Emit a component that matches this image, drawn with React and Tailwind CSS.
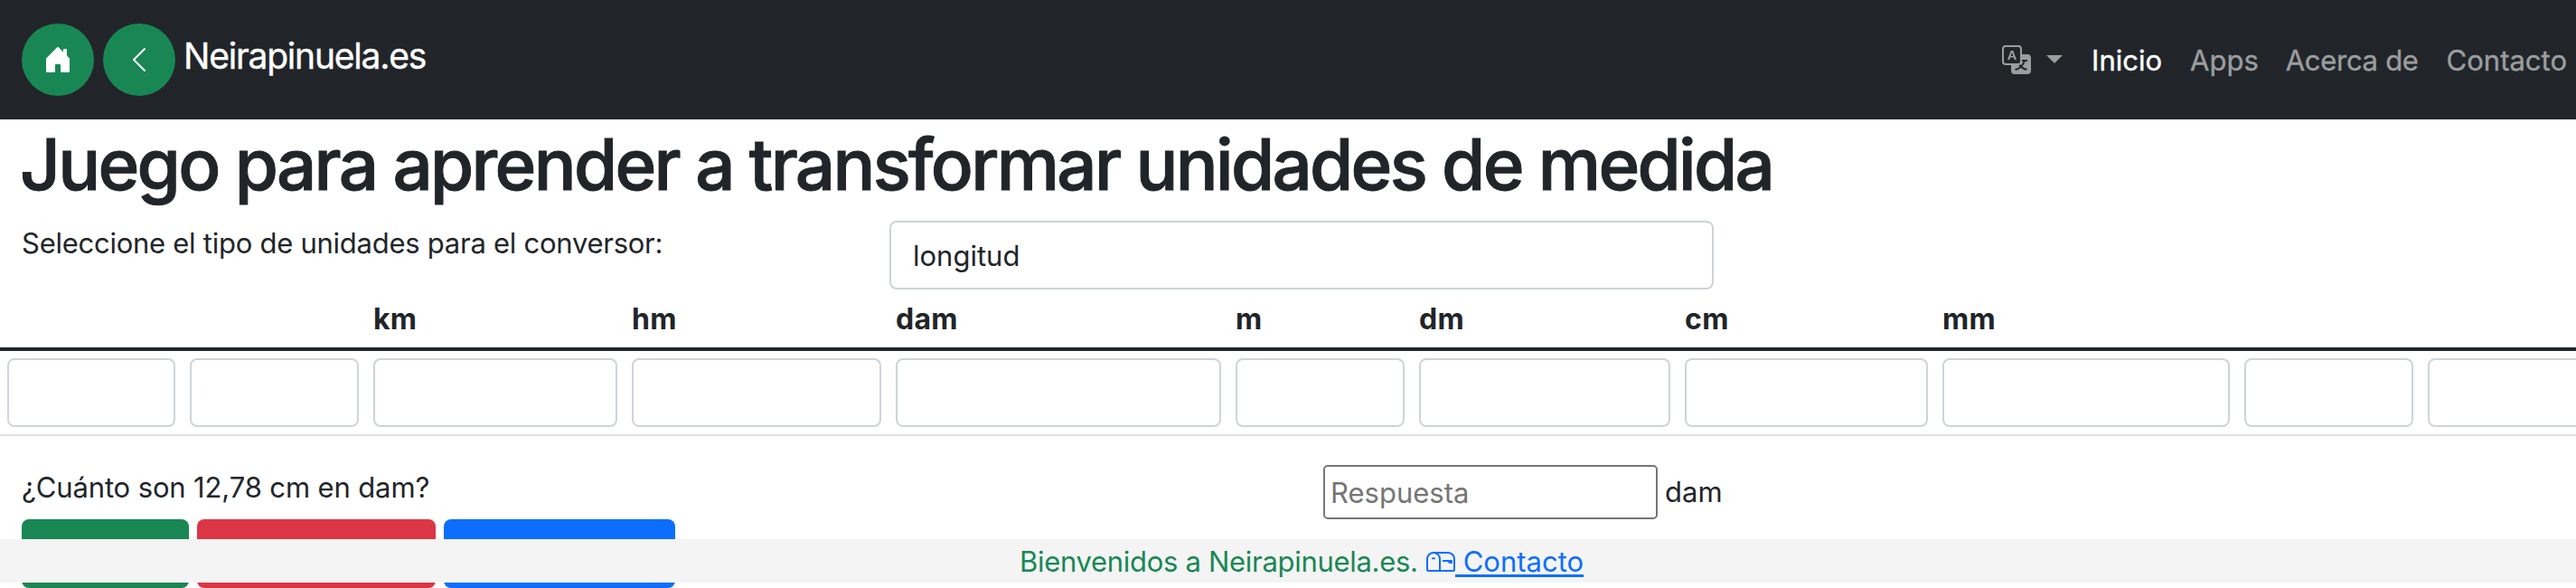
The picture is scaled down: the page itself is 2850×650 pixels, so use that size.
import { BsChevronLeft, BsHouseDoorFill, BsMailbox, BsTranslate } from "react-icons/bs";

const UNITS = ["", "", "km", "hm", "dam", "m", "dm", "cm", "mm", "", ""];
const COLUMNS =
  "grid grid-cols-[202px_203px_286px_292px_376px_203px_294px_285px_334px_203px_203px]";

function RoundButton({ label, children }) {
  return (
    <button
      type="button"
      aria-label={label}
      className="flex size-20 shrink-0 items-center justify-center rounded-full bg-[#198754] text-[32px] text-white"
    >
      {children}
    </button>
  );
}

function Navbar() {
  return (
    <nav className="flex h-[132px] items-center bg-[#212529] pl-6 pr-[10px]">
      <div className="flex items-center gap-[10px]">
        <RoundButton label="Inicio">
          <BsHouseDoorFill />
        </RoundButton>
        <RoundButton label="Volver">
          <BsChevronLeft />
        </RoundButton>
      </div>
      <a className="ml-[9px] pb-2 text-[39px] leading-[60px] tracking-[-1.2px] text-white [-webkit-text-stroke:0.4px]">
        Neirapinuela.es
      </a>
      <div className="ml-auto flex items-center gap-8 text-[#9b9d9f]">
        <div className="flex items-center">
          <BsTranslate className="text-[32px]" />
          <span className="-mt-[2px] ml-[17px] border-x-[9.6px] border-t-[9.6px] border-x-transparent border-t-[#9b9d9f]" />
        </div>
        <a className="pt-[2px] text-white [-webkit-text-stroke:0.4px]">Inicio</a>
        <a className="-ml-[1px] pt-[2px] [-webkit-text-stroke:0.4px]">Apps</a>
        <a className="-ml-[2px] pt-[2px] tracking-[-0.3px] [-webkit-text-stroke:0.4px]">Acerca de</a>
        <a className="-ml-[1px] pt-[2px] [-webkit-text-stroke:0.4px]">Contacto</a>
      </div>
    </nav>
  );
}

function ConverterTable() {
  return (
    <div className="w-[2881px]">
      <div className={`${COLUMNS} border-b-4 border-[#212529] text-[32px] font-bold tracking-[0.3px]`}>
        {UNITS.map((unit, i) => (
          <div key={i} className="h-16 px-2 pt-[9px]">
            {unit}
          </div>
        ))}
      </div>
      <div className={`${COLUMNS} border-b-2 border-[#dee2e6]`}>
        {UNITS.map((unit, i) => (
          <div key={i} className="p-2">
            <input
              aria-label={unit}
              className="block h-[76px] w-full rounded-lg border-2 border-[#ced4da] bg-white px-6"
            />
          </div>
        ))}
      </div>
    </div>
  );
}

export default function App() {
  return (
    <div className="relative h-[650px] w-[2850px] overflow-hidden bg-white font-['Inter',sans-serif] text-[31px] leading-[48px] text-[#212529]">
      <Navbar />
      <main>
        <h1 className="mb-4 h-24 pl-[22px] pt-[2px] text-[78px] font-medium leading-[96px] tracking-[-2.69px] [-webkit-text-stroke:1px]">
          Juego para aprender a transformar unidades de medida
        </h1>
        <div className="grid grid-cols-[960px_912px] pl-6">
          <label className="pt-[1px] tracking-[-0.26px]">
            Seleccione el tipo de unidades para el conversor:
          </label>
          <div className="flex h-[76px] items-center rounded-lg border-2 border-[#ced4da] px-6 pt-[2px]">
            longitud
          </div>
        </div>
        <ConverterTable />
        <div className="mt-8 grid grid-cols-[1440px_auto] pl-6">
          <p className="pt-[1px] tracking-[-0.13px]">¿Cuánto son 12,78 cm en dam?</p>
          <div className="flex items-center gap-2">
            <input
              placeholder="Respuesta"
              className="block h-[60px] w-[370px] rounded-[5px] border-2 border-[#767676] bg-white px-[6px] placeholder:text-[#757575]"
            />
            <span>dam</span>
          </div>
        </div>
        <div className="flex gap-[9px] pl-6">
          <button type="button" aria-label="Comprobar" className="h-[76px] w-[185px] rounded-lg bg-[#198754]" />
          <button type="button" aria-label="Ver respuesta" className="h-[76px] w-[264px] rounded-lg bg-[#dc3545]" />
          <button type="button" aria-label="Nueva pregunta" className="h-[76px] w-[256px] rounded-lg bg-[#0d6efd]" />
        </div>
      </main>
      <footer className="absolute inset-x-0 bottom-[6px] flex h-12 items-center bg-[#f4f4f4] pl-[1128px] text-[#198754]">
        <span className="w-[450px] pt-[1px] tracking-[-0.3px]">Bienvenidos a Neirapinuela.es.</span>
        <a className="flex items-center text-[#0d6efd]">
          <BsMailbox className="text-[32px]" />
          <span className="whitespace-pre pt-[1px] underline decoration-[3px] underline-offset-[3px]"> Contacto</span>
        </a>
      </footer>
    </div>
  );
}
